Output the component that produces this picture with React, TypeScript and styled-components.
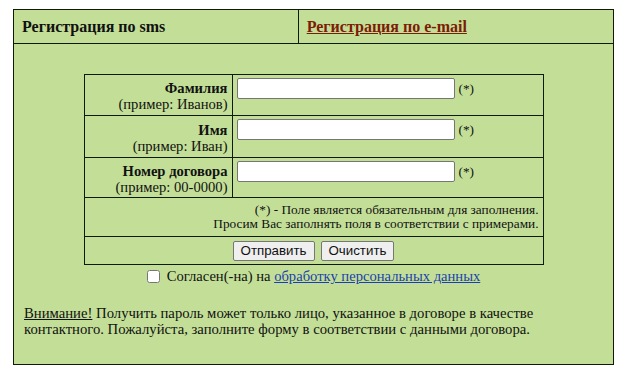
import React from "react";
import styled, { createGlobalStyle } from "styled-components";

const GlobalStyle = createGlobalStyle`
  html, body {
    margin: 0;
    padding: 0;
    background: #ffffff;
  }
  body {
    font-family: "Liberation Serif", "Times New Roman", serif;
    font-size: 14.6px;
    color: #111;
  }
`;

const GREEN = "#c3df97";
const LINE = "#101a08";

const Page = styled.div`
  padding: 9px 0 0 13px;
`;

const Outer = styled.table`
  width: 601px;
  border-collapse: collapse;
  background: ${GREEN};
  border: 1px solid ${LINE};
`;

const HeadCell = styled.td<{ $w: number }>`
  width: ${(p) => p.$w}px;
  height: 33px;
  padding: 0 0 0 8px;
  border: 1px solid ${LINE};
  font-weight: bold;
  font-size: 16px;
  vertical-align: middle;
`;

const TabLink = styled.a`
  color: #7c1c06;
  text-decoration: underline;
`;

const Body = styled.td`
  height: 320px;
  padding: 0;
  vertical-align: top;
`;

const Form = styled.table`
  width: 460px;
  margin: 30px auto 0;
  border-collapse: collapse;
  border: 1px solid ${LINE};
`;

const Row = styled.tr<{ $h: number }>`
  height: ${(p) => p.$h}px;
`;

const LabelCell = styled.td`
  width: 143px;
  padding: 2px 4px 0 0;
  border: 1px solid ${LINE};
  text-align: right;
  line-height: 16px;
  vertical-align: middle;
`;

const LabelName = styled.b`
  display: block;
`;

const FieldCell = styled.td`
  padding: 3px 4px 0 4px;
  border: 1px solid ${LINE};
  vertical-align: top;
  font-size: 13.3px;
`;

const Field = styled.div`
  display: flex;
  align-items: center;
  gap: 4px;
`;

const Input = styled.input`
  box-sizing: border-box;
  width: 218px;
  height: 21px;
  margin: 0;
  border: 1px solid #767676;
  border-radius: 2px;
  background: #fff;
`;

const Note = styled.td`
  padding: 0 4px 0 0;
  border: 1px solid ${LINE};
  text-align: right;
  font-size: 13.3px;
  line-height: 14px;
  vertical-align: middle;
`;

const Buttons = styled.td`
  border: 1px solid ${LINE};
  text-align: center;
  padding: 0;
  vertical-align: middle;
`;

const Button = styled.button`
  height: 20px;
  margin: 0 3px;
  padding: 0 7px;
  font-family: "Liberation Sans", Arial, sans-serif;
  font-size: 13.3px;
  color: #111;
  background: #efefef;
  border: 1px solid #767676;
  border-radius: 2px;
`;

const Agree = styled.div`
  display: flex;
  justify-content: center;
  align-items: center;
  gap: 7px;
  margin: 3px 0 0 0;
`;

const Check = styled.input`
  width: 13px;
  height: 13px;
  margin: 0;
`;

const BlueLink = styled.a`
  color: #1b3fae;
  text-decoration: underline;
`;

const Warning = styled.p`
  margin: 20px 0 0 10px;
  font-size: 14.7px;
  line-height: 16px;
`;

const Attention = styled.span`
  text-decoration: underline;
`;

const fields = [
  { name: "Фамилия", hint: "(пример: Иванов)", h: 41 },
  { name: "Имя", hint: "(пример: Иван)", h: 42 },
  { name: "Номер договора", hint: "(пример: 00-0000)", h: 40 },
];

export default function App() {
  return (
    <>
      <GlobalStyle />
      <Page>
        <Outer>
          <tbody>
            <tr>
              <HeadCell $w={284}>Регистрация по sms</HeadCell>
              <HeadCell $w={316}>
                <TabLink href="#">Регистрация по e-mail</TabLink>
              </HeadCell>
            </tr>
            <tr>
              <Body colSpan={2}>
                <Form>
                  <tbody>
                    {fields.map((f) => (
                      <Row key={f.name} $h={f.h}>
                        <LabelCell>
                          <LabelName>{f.name}</LabelName>
                          {f.hint}
                        </LabelCell>
                        <FieldCell>
                          <Field>
                            <Input type="text" />
                            <span>(*)</span>
                          </Field>
                        </FieldCell>
                      </Row>
                    ))}
                    <Row $h={39}>
                      <Note colSpan={2}>
                        (*) - Поле является обязательным для заполнения.
                        <br />
                        Просим Вас заполнять поля в соответствии с примерами.
                      </Note>
                    </Row>
                    <Row $h={28}>
                      <Buttons colSpan={2}>
                        <Button type="button">Отправить</Button>
                        <Button type="button">Очистить</Button>
                      </Buttons>
                    </Row>
                  </tbody>
                </Form>
                <Agree>
                  <Check type="checkbox" />
                  <span>
                    Согласен(-на) на{" "}
                    <BlueLink href="#">обработку персональных данных</BlueLink>
                  </span>
                </Agree>
                <Warning>
                  <Attention>Внимание!</Attention> Получить пароль может только
                  лицо, указанное в договоре в качестве контактного.
                  Пожалуйста, заполните форму в соответствии с данными договора.
                </Warning>
              </Body>
            </tr>
          </tbody>
        </Outer>
      </Page>
    </>
  );
}
